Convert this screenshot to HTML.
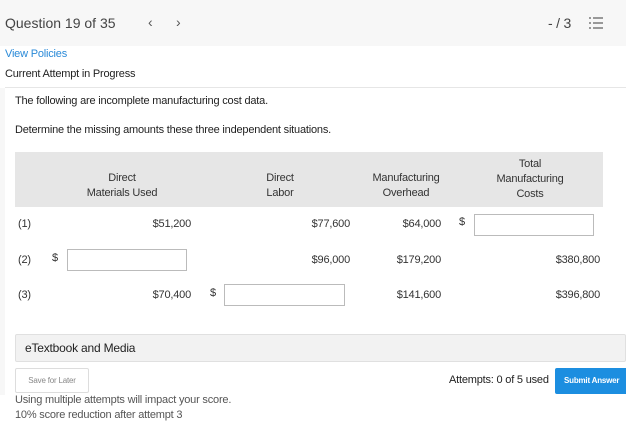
<!DOCTYPE html>
<html><head><meta charset="utf-8"><style>
*{margin:0;padding:0;box-sizing:border-box}
body{width:626px;height:424px;overflow:hidden;background:#fff;font-family:"Liberation Sans",sans-serif;color:#333;position:relative;letter-spacing:-0.2px}
.a{position:absolute;white-space:nowrap}
.hdr{position:absolute;left:0;top:0;width:626px;height:46px;background:#f7f7f7}
.strip{position:absolute;left:0;top:88px;width:5px;height:307px;background:#f7f7f7}
.line{position:absolute;left:5px;top:87px;width:621px;height:1px;background:#e6e6e6}
.th{position:absolute;left:15px;top:152px;width:588px;height:55px;background:#e6e6e6}
.c{text-align:center;font-size:11px;line-height:15px}
.n{font-size:11px}
.in{position:absolute;height:22px;border:1px solid #bbb;background:#fff}
</style></head><body>
<div class="hdr"></div>
<div class="a" style="left:5px;top:15px;font-size:14px;color:#444;letter-spacing:0">Question 19 of 35</div>
<div class="a" style="left:148px;top:14px;font-size:14px;color:#555">‹</div>
<div class="a" style="left:176px;top:14px;font-size:14px;color:#555">›</div>
<div class="a" style="left:548px;top:15px;font-size:14px;color:#444">- / 3</div>
<svg class="a" style="left:589px;top:17px" width="14" height="12"><g fill="#999"><rect x="0" y="0" width="2" height="2"/><rect x="0" y="5" width="2" height="2"/><rect x="0" y="10" width="2" height="2"/><rect x="4" y="0" width="10" height="2"/><rect x="4" y="5" width="10" height="2"/><rect x="4" y="10" width="10" height="2"/></g></svg>
<div class="a" style="left:5px;top:48px;font-size:11px;color:#2a8ad8">View Policies</div>
<div class="a" style="left:5px;top:68px;font-size:11px;color:#222">Current Attempt in Progress</div>
<div class="strip"></div><div class="line"></div>
<div class="a" style="left:15px;top:95px;font-size:11px;color:#222">The following are incomplete manufacturing cost data.</div>
<div class="a" style="left:15px;top:124px;font-size:11px;color:#222">Determine the missing amounts these three independent situations.</div>
<div class="th"></div>
<div class="a c" style="left:72px;top:171px;width:100px">Direct<br>Materials Used</div>
<div class="a c" style="left:240px;top:171px;width:80px">Direct<br>Labor</div>
<div class="a c" style="left:356px;top:171px;width:100px">Manufacturing<br>Overhead</div>
<div class="a c" style="left:480px;top:157px;width:100px">Total<br>Manufacturing<br>Costs</div>
<div class="a n" style="left:18px;top:218px">(1)</div>
<div class="a n" style="left:18px;top:254px">(2)</div>
<div class="a n" style="left:18px;top:289px">(3)</div>
<div class="a n" style="left:126px;top:218px;width:65px;text-align:right">$51,200</div>
<div class="a n" style="left:280px;top:218px;width:70px;text-align:right">$77,600</div>
<div class="a n" style="left:370px;top:218px;width:71px;text-align:right">$64,000</div>
<div class="a n" style="left:459px;top:216px">$</div>
<div class="in" style="left:474px;top:214px;width:120px"></div>
<div class="a n" style="left:52px;top:252px">$</div>
<div class="in" style="left:67px;top:249px;width:120px"></div>
<div class="a n" style="left:280px;top:254px;width:70px;text-align:right">$96,000</div>
<div class="a n" style="left:370px;top:254px;width:71px;text-align:right">$179,200</div>
<div class="a n" style="left:520px;top:254px;width:80px;text-align:right">$380,800</div>
<div class="a n" style="left:126px;top:289px;width:65px;text-align:right">$70,400</div>
<div class="a n" style="left:210px;top:287px">$</div>
<div class="in" style="left:224px;top:284px;width:121px"></div>
<div class="a n" style="left:370px;top:289px;width:71px;text-align:right">$141,600</div>
<div class="a n" style="left:520px;top:289px;width:80px;text-align:right">$396,800</div>
<div class="a" style="left:15px;top:334px;width:611px;height:28px;background:#f2f2f2;border:1px solid #e0e0e0;border-radius:2px"></div>
<div class="a" style="left:25px;top:341px;font-size:12px;color:#222">eTextbook and Media</div>
<div class="a" style="left:15px;top:368px;width:74px;height:25px;border:1px solid #ddd;border-radius:2px;font-size:8px;color:#888;text-align:center;line-height:23px">Save for Later</div>
<div class="a" style="left:449px;top:374px;font-size:11px;color:#222">Attempts: 0 of 5 used</div>
<div class="a" style="left:555px;top:368px;width:75px;height:26px;background:#1c8ee0;border-radius:2px;color:#fff;font-size:8px;font-weight:bold;line-height:26px;padding-left:9px">Submit Answer</div>
<div class="a" style="left:15px;top:394px;font-size:11px;color:#555">Using multiple attempts will impact your score.</div>
<div class="a" style="left:15px;top:409px;font-size:11px;color:#555">10% score reduction after attempt 3</div>
</body></html>
